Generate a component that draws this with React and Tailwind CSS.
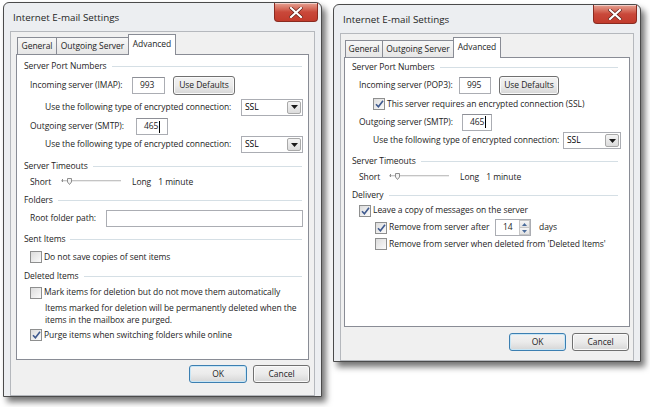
import React from 'react';

const font = { fontFamily: '"Open Sans", "Noto Sans", "Liberation Sans", sans-serif' };

function CloseButton() {
  return (
    <div className="flex h-[19px] w-[44px] items-center justify-center rounded-b-[4px] border border-t-0 border-[#8a2a20] bg-gradient-to-b from-[#e5a293] via-[#c9483a] to-[#c23b2c] shadow-[inset_0_1px_0_rgba(255,255,255,0.5)]">
      <svg width="14" height="11" viewBox="0 0 14 11">
        <path d="M2 1 L12 10 M12 1 L2 10" stroke="#5a1a12" strokeWidth="3.4" strokeLinecap="square" />
        <path d="M2 1 L12 10 M12 1 L2 10" stroke="#ffffff" strokeWidth="2.2" strokeLinecap="square" />
      </svg>
    </div>
  );
}

function Tabs({ widths, pl }) {
  const names = ['General', 'Outgoing Server', 'Advanced'];
  return (
    <div className="flex h-[20px] items-end" style={{ paddingLeft: pl }}>
      {names.map((n, i) =>
        i === 2 ? (
          <div
            key={n}
            style={{ width: widths[i] }}
            className="relative z-10 -mb-px flex h-[21px] items-start justify-center border border-b-0 border-[#898c95] bg-white pt-[3px]"
          >
            {n}
          </div>
        ) : (
          <div
            key={n}
            style={{ width: widths[i] }}
            className={`flex h-[17px] items-center justify-center border border-b-0 border-[#898c95] bg-gradient-to-b from-[#f7f7f7] to-[#e6e6e6] ${i === 1 ? 'border-l-0 border-r-0' : ''}`}
          >
            {n}
          </div>
        )
      )}
    </div>
  );
}

function Section({ title, mt = 0, pr = 6 }) {
  return (
    <div className="flex h-[14px] items-center pl-[7px]" style={{ marginTop: mt, paddingRight: pr }}>
      <span className="pr-[5px]">{title}</span>
      <div className="h-px flex-1 bg-[#d5dfe5]" />
    </div>
  );
}

function Box({ w, h = 17, children, cursor }) {
  return (
    <div
      style={{ width: w, height: h }}
      className="flex shrink-0 items-center border border-[#abadb3] border-t-[#8d8f96] bg-white pl-[7px]"
    >
      {children}
      {cursor && <span className="ml-px inline-block h-[12px] w-px bg-black" />}
    </div>
  );
}

function Button({ w, h = 19, children, primary }) {
  return (
    <div
      style={{ width: w, height: h }}
      className={`flex shrink-0 items-center justify-center rounded-[3px] border bg-gradient-to-b from-[#f2f2f2] via-[#ebebeb] to-[#d6d6d6] ${
        primary ? 'border-[#3c7fb1] shadow-[inset_0_0_0_1px_#c8e6f6]' : 'border-[#707070] shadow-[inset_0_0_0_1px_#fafafa]'
      }`}
    >
      {children}
    </div>
  );
}

function Select({ w }) {
  return (
    <div style={{ width: w }} className="flex h-[17px] items-center border border-[#abadb3] bg-white">
      <span className="flex-1 pl-[3px] text-black">SSL</span>
      <div className="mr-px flex h-[13px] w-[14px] items-center justify-center rounded-[2px] border border-[#a9a9a9] bg-gradient-to-b from-[#f4f4f4] to-[#dcdcdc]">
        <svg width="7" height="4" viewBox="0 0 7 4">
          <path d="M0 0 H7 L3.5 4 Z" fill="#1a1a1a" />
        </svg>
      </div>
    </div>
  );
}

function Check({ checked }) {
  return (
    <div className="flex h-[12px] w-[12px] shrink-0 items-center justify-center border border-[#8e8f8f] bg-gradient-to-br from-[#dcdcdc] to-[#fbfbfb]">
      {checked && (
        <svg width="9" height="8" viewBox="0 0 9 8">
          <path d="M1 4.2 L3.4 6.8 L8 0.8" stroke="#3f5a8f" strokeWidth="1.6" fill="none" />
        </svg>
      )}
    </div>
  );
}

function Slider() {
  return (
    <svg width="60" height="10" viewBox="0 0 60 10">
      <rect x="0" y="3" width="60" height="2" fill="#ececec" />
      <line x1="0" y1="3.5" x2="60" y2="3.5" stroke="#c4c4c4" strokeWidth="1" />
      <path d="M1.5 2 V5 M6.5 1.5 H10.5 V5 L8.5 7.5 L6.5 5 Z" stroke="#8f8f8f" strokeWidth="1" fill="#f4f4f4" />
    </svg>
  );
}

function Dialog({ width, height, mt, ml, children }) {
  return (
    <div
      style={{ width, height, marginTop: mt, marginLeft: ml }}
      className="flex shrink-0 flex-col rounded-t-[6px] border border-[#4b4b4b] bg-[#eceef1] px-[6px] shadow-[4px_5px_6px_rgba(0,0,0,0.55)]"
    >
      <div className="flex h-[28px] items-start justify-between">
        <span className="pl-[3px] pt-[10px] text-[9.8px] leading-none text-[#1e1e1e]">Internet E-mail Settings</span>
        <div className="-mr-[3px]">
          <CloseButton />
        </div>
      </div>
      <div className="flex flex-1 flex-col border border-[#b5b8bd] bg-[#f0f0f0]">{children}</div>
    </div>
  );
}

function LeftPanel() {
  return (
    <div className="flex flex-col whitespace-nowrap pt-[2px] text-[8.5px] tracking-[-0.05px] text-[#1e1e1e]">
      <Tabs widths={[40, 71, 48]} pl={6} />
      <div className="mx-[5px] flex h-[306px] flex-col border border-[#898c95] bg-white">
        <Section title="Server Port Numbers" mt={4} />
        <div className="flex h-[24px] items-center pl-[13px]">
          <span className="w-[102px] shrink-0">Incoming server (IMAP):</span>
          <Box w={33}>993</Box>
          <div className="ml-[8px]">
            <Button w={62}>Use Defaults</Button>
          </div>
        </div>
        <div className="flex h-[20px] items-center pl-[28px] pr-[5px]">
          <span>Use the following type of encrypted connection:</span>
          <div className="ml-auto">
            <Select w={62} />
          </div>
        </div>
        <div className="flex h-[19px] items-center pl-[13px]">
          <span className="w-[106px] shrink-0">Outgoing server (SMTP):</span>
          <Box w={32} cursor>465</Box>
        </div>
        <div className="flex h-[17px] items-center pl-[28px] pr-[5px]">
          <span>Use the following type of encrypted connection:</span>
          <div className="ml-auto">
            <Select w={62} />
          </div>
        </div>
        <Section title="Server Timeouts" mt={6} />
        <div className="flex h-[18px] items-center pl-[13px]">
          <span className="w-[31px]">Short</span>
          <Slider />
          <span className="ml-[11px]">Long</span>
          <span className="ml-[7px]">1 minute</span>
        </div>
        <Section title="Folders" mt={2} />
        <div className="flex h-[23px] items-center pl-[13px] pr-[5px]">
          <span className="w-[76px] shrink-0">Root folder path:</span>
          <div className="h-[17px] flex-1 border border-[#abadb3] bg-white" />
        </div>
        <Section title="Sent Items" mt={2} />
        <div className="flex h-[22px] items-center gap-[2px] pl-[13px]">
          <Check />
          <span>Do not save copies of sent items</span>
        </div>
        <Section title="Deleted Items" mt={1} />
        <div className="flex h-[19px] items-center gap-[2px] pl-[13px]">
          <Check />
          <span>Mark items for deletion but do not move them automatically</span>
        </div>
        <div className="pl-[28px] leading-[12px]">
          Items marked for deletion will be permanently deleted when the
          <br />
          items in the mailbox are purged.
        </div>
        <div className="flex h-[18px] items-center gap-[2px] pl-[13px]">
          <Check checked />
          <span>Purge items when switching folders while online</span>
        </div>
      </div>
      <div className="flex justify-end gap-[6px] pr-[4px] pt-[5px]">
        <Button w={58} h={18} primary>OK</Button>
        <Button w={57} h={18}>Cancel</Button>
      </div>
    </div>
  );
}

function RightPanel() {
  return (
    <div className="flex flex-col whitespace-nowrap pt-[3px] text-[8.5px] tracking-[-0.05px] text-[#1e1e1e]">
      <Tabs widths={[38, 70, 48]} pl={4} />
      <div className="mx-[3px] flex h-[270px] flex-col border border-[#898c95] bg-white">
        <Section title="Server Port Numbers" mt={2} pr={11} />
        <div className="flex h-[22px] items-center pl-[14px]">
          <span className="w-[100px] shrink-0">Incoming server (POP3):</span>
          <Box w={32}>995</Box>
          <div className="ml-[8px]">
            <Button w={60}>Use Defaults</Button>
          </div>
        </div>
        <div className="flex h-[16px] items-center gap-[2px] pl-[28px]">
          <Check checked />
          <span>This server requires an encrypted connection (SSL)</span>
        </div>
        <div className="flex h-[20px] items-center pl-[14px]">
          <span className="w-[103px] shrink-0">Outgoing server (SMTP):</span>
          <Box w={30} cursor>465</Box>
        </div>
        <div className="flex h-[17px] items-center pl-[28px] pr-[8px]">
          <span>Use the following type of encrypted connection:</span>
          <div className="ml-auto">
            <Select w={58} />
          </div>
        </div>
        <Section title="Server Timeouts" mt={5} pr={11} />
        <div className="flex h-[18px] items-center pl-[14px]">
          <span className="w-[30px]">Short</span>
          <Slider />
          <span className="ml-[11px]">Long</span>
          <span className="ml-[7px]">1 minute</span>
        </div>
        <Section title="Delivery" mt={2} pr={11} />
        <div className="flex h-[17px] items-center gap-[2px] pl-[14px]">
          <Check checked />
          <span>Leave a copy of messages on the server</span>
        </div>
        <div className="flex h-[17px] items-center pl-[30px]">
          <Check checked />
          <span className="ml-[2px] w-[106px] shrink-0">Remove from server after</span>
          <div className="flex h-[17px] w-[36px] items-center border border-[#abadb3] bg-white">
            <span className="flex-1 pl-[7px]">14</span>
            <div className="flex h-full w-[11px] flex-col">
              <div className="flex flex-1 items-center justify-center border border-[#c6c6c6] bg-gradient-to-b from-[#f5f5f5] to-[#e2e2e2]">
                <svg width="5" height="3" viewBox="0 0 5 3"><path d="M0 3 L2.5 0 L5 3 Z" fill="#4a6b9a" /></svg>
              </div>
              <div className="flex flex-1 items-center justify-center border border-t-0 border-[#c6c6c6] bg-gradient-to-b from-[#f5f5f5] to-[#e2e2e2]">
                <svg width="5" height="3" viewBox="0 0 5 3"><path d="M0 0 L5 0 L2.5 3 Z" fill="#4a6b9a" /></svg>
              </div>
            </div>
          </div>
          <span className="ml-[8px]">days</span>
        </div>
        <div className="flex h-[16px] items-center gap-[2px] pl-[30px]">
          <Check />
          <span>Remove from server when deleted from 'Deleted Items'</span>
        </div>
      </div>
      <div className="flex justify-end gap-[6px] pr-[4px] pt-[6px]">
        <Button w={57} h={18} primary>OK</Button>
        <Button w={57} h={18}>Cancel</Button>
      </div>
    </div>
  );
}

export default function App() {
  return (
    <div style={font} className="flex h-[407px] w-[650px] items-start overflow-hidden bg-white">
      <Dialog width={319} height={395} mt={2} ml={3}>
        <LeftPanel />
      </Dialog>
      <Dialog width={308} height={358} mt={4} ml={11}>
        <RightPanel />
      </Dialog>
    </div>
  );
}
